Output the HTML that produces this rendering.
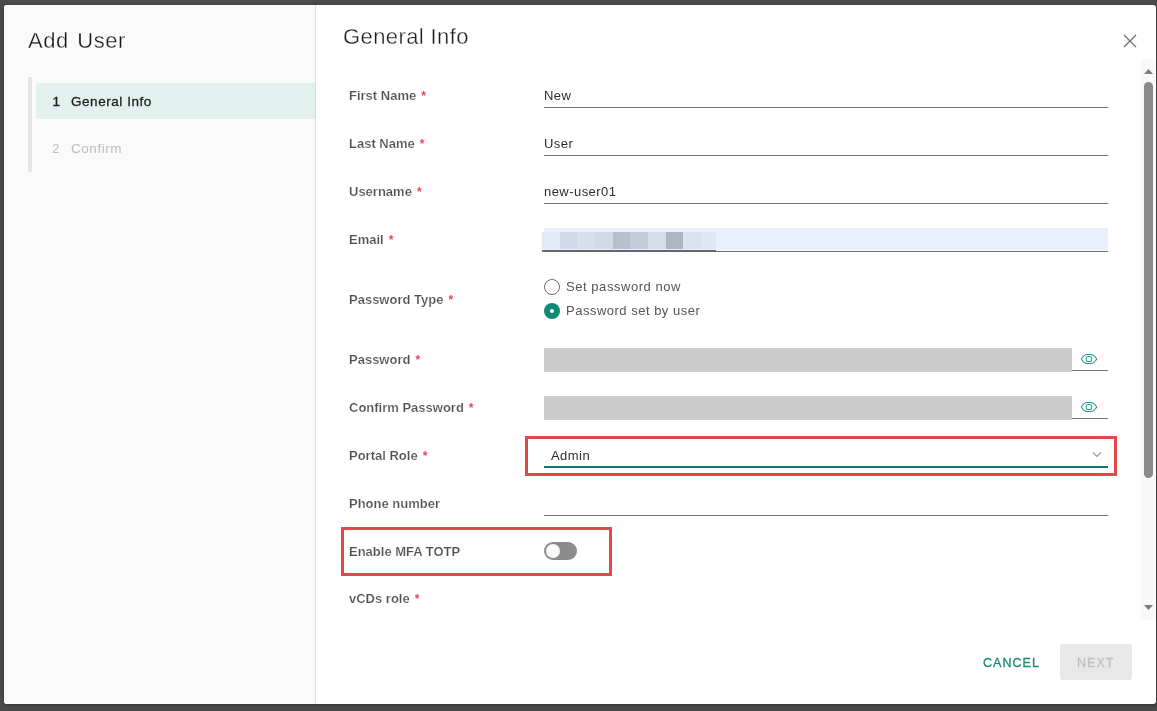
<!DOCTYPE html>
<html><head><meta charset="utf-8">
<style>
*{box-sizing:border-box;margin:0;padding:0}
html,body{width:1157px;height:711px;overflow:hidden;background:#4a4a4a;font-family:"Liberation Sans",sans-serif;position:relative}
.a{position:absolute}
.t{position:absolute;white-space:nowrap;line-height:1}
.lbl{font-weight:bold;font-size:13px;color:#505050;-webkit-text-stroke:0.2px #fff}
.req{color:#e44a50;margin-left:5px;font-size:12px;-webkit-text-stroke:0}
.val{font-size:13px;color:#2e2e2e;letter-spacing:0.45px}
.ul{position:absolute;height:1px;background:#717476}
</style></head><body>
<div id="root" style="position:absolute;left:0;top:0;width:1157px;height:711px;will-change:transform">
<!-- modal -->
<div class="a" style="left:4px;top:5px;width:1152px;height:699px;background:#fff;border-radius:3px;box-shadow:0 1px 3px rgba(0,0,0,0.35)"></div>
<div class="a" style="left:4px;top:5px;width:312px;height:699px;background:#fafafa;border-right:1px solid #dcdcdc;border-radius:3px 0 0 3px"></div>

<!-- sidebar -->
<div class="t" style="left:28px;top:30px;font-size:22px;color:#151515;letter-spacing:0.6px;word-spacing:1.5px;-webkit-text-stroke:0.35px #fafafa">Add User</div>
<div class="a" style="left:28px;top:77px;width:4px;height:95px;background:#e5e5e5"></div>
<div class="a" style="left:36px;top:83px;width:279px;height:36px;background:#e3f1ee;border-radius:3px 0 0 3px"></div>
<div class="t" style="left:52.5px;top:94.6px;font-size:13.5px;color:#1f1f1f;-webkit-text-stroke:0.35px #1f1f1f">1</div>
<div class="t" style="left:71px;top:94.6px;font-size:13.5px;color:#1f1f1f;letter-spacing:0.55px;-webkit-text-stroke:0.3px #1f1f1f">General Info</div>
<div class="t" style="left:52px;top:141.6px;font-size:13.5px;color:#bdbdbd">2</div>
<div class="t" style="left:71px;top:141.6px;font-size:13.5px;color:#bdbdbd;letter-spacing:0.55px">Confirm</div>

<!-- content header -->
<div class="t" style="left:343px;top:26px;font-size:22px;color:#1e1e1e;letter-spacing:0.4px;-webkit-text-stroke:0.35px #fff">General Info</div>
<svg class="a" style="left:1122px;top:33px" width="16" height="16" viewBox="0 0 16 16"><path d="M2 2L14 14M14 2L2 14" stroke="#6e6e6e" stroke-width="1.25" fill="none"/></svg>

<!-- rows -->
<div class="t lbl" style="left:349px;top:89px">First Name<span class="req">*</span></div>
<div class="t val" style="left:544px;top:89px">New</div>
<div class="ul" style="left:544px;top:107px;width:564px"></div>

<div class="t lbl" style="left:349px;top:137px">Last Name<span class="req">*</span></div>
<div class="t val" style="left:544px;top:137px">User</div>
<div class="ul" style="left:544px;top:155px;width:564px"></div>

<div class="t lbl" style="left:349px;top:185px">Username<span class="req">*</span></div>
<div class="t val" style="left:544px;top:185px">new-user01</div>
<div class="ul" style="left:544px;top:203px;width:564px"></div>

<div class="t lbl" style="left:349px;top:233px">Email<span class="req">*</span></div>
<div class="a" style="left:544px;top:228px;width:564px;height:22px;background:#e8f0fe"></div>
<div class="ul" style="left:544px;top:251px;width:564px;background:#66727a"></div>
<div class="a" style="left:542px;top:232px;height:17px;display:flex">
  <div style="width:18px;background:#e2e8f5"></div>
  <div style="width:17px;background:#d3d9e8"></div>
  <div style="width:18px;background:#d9dfed"></div>
  <div style="width:18px;background:#d3d9e7"></div>
  <div style="width:17px;background:#b9bfcc"></div>
  <div style="width:18px;background:#c6ccd9"></div>
  <div style="width:18px;background:#d6dcea"></div>
  <div style="width:17px;background:#aeb4c2"></div>
  <div style="width:18px;background:#dbe1ef"></div>
  <div style="width:15px;background:#e0e6f4"></div>
</div>
<div class="a" style="left:542px;top:250px;width:174px;height:2px;background:#5e6a70"></div>

<div class="t lbl" style="left:349px;top:293px">Password Type<span class="req">*</span></div>
<div class="a" style="left:544px;top:279px;width:16px;height:16px;border:1px solid #6e6e6e;border-radius:50%;background:#fff"></div>
<div class="t val" style="left:566px;top:280px;color:#565656;letter-spacing:0.55px">Set password now</div>
<div class="a" style="left:544px;top:303px;width:16px;height:16px;border-radius:50%;background:#0f8a72"></div>
<div class="a" style="left:550px;top:309px;width:4px;height:4px;border-radius:50%;background:#fff"></div>
<div class="t val" style="left:566px;top:304px;color:#565656;letter-spacing:0.5px">Password set by user</div>

<div class="t lbl" style="left:349px;top:353px">Password<span class="req">*</span></div>
<div class="a" style="left:544px;top:348px;width:528px;height:24px;background:#cccccc"></div>
<div class="ul" style="left:1072px;top:370px;width:36px"></div>
<svg class="a" style="left:1080px;top:353px" width="18" height="12" viewBox="0 0 18 12"><path d="M1.2 6C3.2 2.8 5 1.5 7.2 1.5L10.8 1.5C13 1.5 14.8 2.8 16.8 6C14.8 9.2 13 10.5 10.8 10.5L7.2 10.5C5 10.5 3.2 9.2 1.2 6Z" stroke="#25998a" stroke-width="1.05" fill="none"/><rect x="6.3" y="3.5" width="5.4" height="5" rx="1.8" stroke="#25998a" stroke-width="1.05" fill="none"/></svg>

<div class="t lbl" style="left:349px;top:401px">Confirm Password<span class="req">*</span></div>
<div class="a" style="left:544px;top:396px;width:528px;height:24px;background:#cccccc"></div>
<div class="ul" style="left:1072px;top:418px;width:36px"></div>
<svg class="a" style="left:1080px;top:401px" width="18" height="12" viewBox="0 0 18 12"><path d="M1.2 6C3.2 2.8 5 1.5 7.2 1.5L10.8 1.5C13 1.5 14.8 2.8 16.8 6C14.8 9.2 13 10.5 10.8 10.5L7.2 10.5C5 10.5 3.2 9.2 1.2 6Z" stroke="#25998a" stroke-width="1.05" fill="none"/><rect x="6.3" y="3.5" width="5.4" height="5" rx="1.8" stroke="#25998a" stroke-width="1.05" fill="none"/></svg>

<div class="t lbl" style="left:349px;top:449px">Portal Role<span class="req">*</span></div>
<div class="t val" style="left:551px;top:449px">Admin</div>
<div class="a" style="left:544px;top:466px;width:564px;height:2px;background:#0c7a68"></div>
<svg class="a" style="left:1092px;top:451px" width="10" height="7" viewBox="0 0 10 7"><path d="M1 1.5L5 5.5L9 1.5" stroke="#9a9a9a" stroke-width="1.1" fill="none"/></svg>
<div class="a" style="left:525px;top:436px;width:592px;height:40px;border:3px solid #e24a4a"></div>

<div class="t lbl" style="left:349px;top:497px">Phone number</div>
<div class="ul" style="left:544px;top:515px;width:564px"></div>

<div class="t lbl" style="left:349px;top:545px">Enable MFA TOTP</div>
<div class="a" style="left:544px;top:542px;width:33px;height:18px;border-radius:9px;background:#8c8c8c"></div>
<div class="a" style="left:546px;top:544px;width:14px;height:14px;border-radius:50%;background:#f9f9f9"></div>
<div class="a" style="left:341px;top:527px;width:271px;height:49px;border:3px solid #e24a4a"></div>

<div class="t lbl" style="left:349px;top:592px">vCDs role<span class="req">*</span></div>

<!-- scrollbar -->
<div class="a" style="left:1141px;top:59px;width:14px;height:561px;background:#f9f9f9"></div>
<svg class="a" style="left:1141px;top:59px" width="14" height="20"><path d="M3 15L7.5 10L12 15Z" fill="#7d7d7d"/></svg>
<div class="a" style="left:1144px;top:82px;width:9px;height:396px;border-radius:5px;background:#8a8a8a"></div>
<svg class="a" style="left:1141px;top:600px" width="14" height="20"><path d="M3 5L7.5 10L12 5Z" fill="#7d7d7d"/></svg>

<!-- footer -->
<div class="t" style="left:983px;top:657px;font-size:12.5px;color:#1b8a76;letter-spacing:1.05px;-webkit-text-stroke:0.3px #1b8a76">CANCEL</div>
<div class="a" style="left:1060px;top:644px;width:72px;height:36px;background:#e8e8e8;border-radius:3px"></div>
<div class="t" style="left:1077px;top:657px;font-size:12.5px;color:#c0c0c0;letter-spacing:1.05px;-webkit-text-stroke:0.3px #c0c0c0">NEXT</div>
</div>
</body></html>
